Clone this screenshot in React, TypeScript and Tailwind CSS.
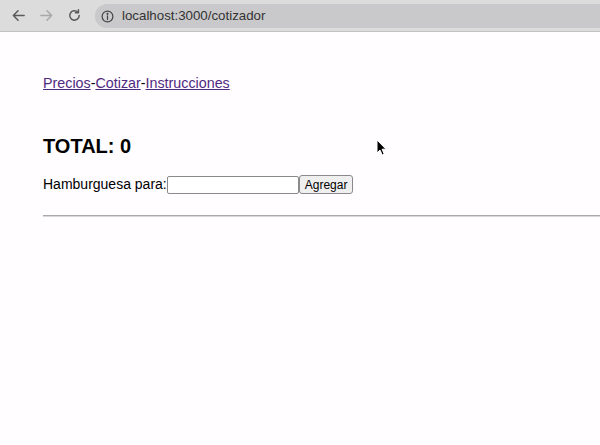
import { useState } from "react"

function ChromeBar() {
  return (
    <div className="h-[32px] bg-[#dcdcdc] border-b border-[#c2c2c2] flex items-center relative">
      {/* Flechas y recarga */}
      <svg className="absolute left-[11px] top-[8px]" width="15" height="15" viewBox="0 0 16 16" fill="none" stroke="#5a5a5a" strokeWidth="1.6" strokeLinecap="round" strokeLinejoin="round">
        <path d="M14 8H2.5M7.5 3L2.5 8l5 5" />
      </svg>
      <svg className="absolute left-[39px] top-[8px]" width="15" height="15" viewBox="0 0 16 16" fill="none" stroke="#a8a8a8" strokeWidth="1.6" strokeLinecap="round" strokeLinejoin="round">
        <path d="M2 8h11.5M8.5 3l5 5-5 5" />
      </svg>
      <svg className="absolute left-[67px] top-[8px]" width="15" height="15" viewBox="0 0 16 16" fill="none" stroke="#5a5a5a" strokeWidth="1.6" strokeLinecap="round" strokeLinejoin="round">
        <path d="M13 8a5 5 0 1 1-1.5-3.6" />
        <path d="M12.2 1.8v3.2H9" />
      </svg>

      {/* Barra de direccion */}
      <div className="absolute left-[95px] top-[4px] right-[-30px] h-[24px] rounded-full bg-[#c9c8ca] flex items-center">
        <svg className="ml-[6px]" width="13" height="13" viewBox="0 0 14 14" fill="none" stroke="#444" strokeWidth="1.3">
          <circle cx="7" cy="7" r="5.8" />
          <path d="M7 6.2v4" strokeLinecap="round" />
          <circle cx="7" cy="4.1" r="0.5" fill="#444" />
        </svg>
        <span className="ml-[8px] text-[13.3px] text-[#333] font-['Liberation_Sans',Arial,sans-serif]">
          localhost:3000/cotizador
        </span>
      </div>
    </div>
  )
}

function App() {
  const [nombre, setNombre] = useState("")

  return (
    <div className="w-[600px] h-[445px] bg-[#fffdff] overflow-hidden relative font-['Liberation_Sans',Arial,sans-serif] text-black">
      <ChromeBar />

      <div className="pl-[43px]">
        {/* Navegacion */}
        <div className="mt-[43px] text-[14.3px] leading-[16px]">
          <a href="#" className="text-[#4f2a7f] underline">Precios</a>
          -
          <a href="#" className="text-[#4f2a7f] underline">Cotizar</a>
          -
          <a href="#" className="text-[#4f2a7f] underline">Instrucciones</a>
        </div>

        {/* Total */}
        <h2 className="mt-[43px] text-[20px] leading-[24px] font-bold">TOTAL: 0</h2>

        {/* Formulario */}
        <div className="mt-[17px] flex items-center text-[14px] leading-[19px]">
          <span>Hamburguesa para:</span>
          <input
            value={nombre}
            onChange={(e) => setNombre(e.target.value)}
            className="w-[132px] h-[18px] border border-[#8a8a8a] rounded-[2px] bg-white text-[13px] px-1"
          />
          <button className="h-[19px] px-[5px] text-[12px] border border-[#8a8a8a] rounded-[3px] bg-[#efefef]">
            Agregar
          </button>
        </div>

        <div className="mt-[21px] border-t border-[#a9a9a9] border-b border-b-[#d8d8d8]" />
      </div>

      {/* Cursor */}
      <svg className="absolute left-[376px] top-[139px]" width="11" height="17" viewBox="0 0 11 17">
        <path d="M1 1v13l3-3 2.2 5 2-0.9-2.1-4.9H10z" fill="#000" stroke="#fff" strokeWidth="1" />
      </svg>
    </div>
  )
}

export default App
